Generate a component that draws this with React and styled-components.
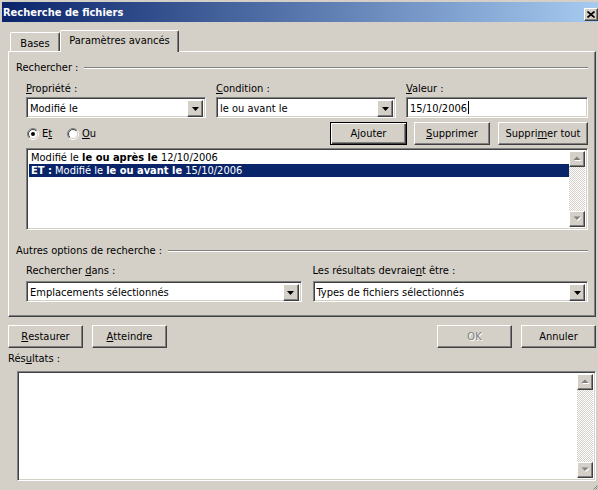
import React from 'react';
import styled, { createGlobalStyle, css } from 'styled-components';

const FONT = `"DejaVu Sans Condensed", "Liberation Sans", Arial, sans-serif`;

const Global = createGlobalStyle`
  html, body { margin: 0; padding: 0; background: #d4d0c8; }
  body { font-family: ${FONT}; font-size: 11px; color: #000; }
  * { box-sizing: border-box; }
  #root { width: 598px; height: 490px; }
`;

const raised = css`
  background: #d4d0c8;
  border: 1px solid;
  border-color: #fff #404040 #404040 #fff;
  box-shadow: inset -1px -1px #808080;
`;

const sunken = css`
  background: #fff;
  border: 1px solid;
  border-color: #808080 #fff #fff #808080;
  box-shadow: inset 1px 1px #404040, inset -1px -1px #d4d0c8;
`;

const Window = styled.div`
  position: relative;
  width: 598px;
  height: 490px;
  background: #d4d0c8;
  padding-top: 2px;
  padding-left: 2px;
  display: flex;
  flex-direction: column;
  overflow: hidden;
`;

const TitleBar = styled.div`
  height: 20px;
  display: flex;
  align-items: stretch;
  padding-left: 1px;
  background: linear-gradient(to right, #0a246a 0%, #a6caf0 100%);
  color: #fff;
  font-weight: bold;
  font-size: 11px;
`;

const TitleText = styled.div`
  flex: 1;
  line-height: 20px;
  padding-top: 1px;
  white-space: nowrap;
`;

const CloseButton = styled.div`
  ${raised};
  align-self: flex-end;
  width: 14px;
  height: 13px;
  margin-bottom: 1px;
  display: flex;
  align-items: center;
  justify-content: center;
`;

const Body = styled.div`
  padding: 8px 2px 0 6px;
  display: flex;
  flex-direction: column;
`;

const TabStrip = styled.div`
  height: 21px;
  display: flex;
  align-items: flex-end;
  padding-left: 2px;
`;

const Tab = styled.div`
  position: relative;
  width: ${(p) => p.$width}px;
  background: #d4d0c8;
  border-top: 1px solid #fff;
  border-left: 1px solid #fff;
  border-right: 1px solid #404040;
  box-shadow: inset -1px 0 #808080;
  border-radius: 2px 2px 0 0;
  text-align: center;
  line-height: 16px;
  white-space: nowrap;
  ${(p) =>
    p.$active
      ? css`
          height: 22px;
          margin-bottom: -1px;
          padding-top: 2px;
          z-index: 1;
        `
      : css`
          height: 19px;
          padding-top: 3px;
        `}
`;

const Panel = styled.div`
  height: 266px;
  border: 1px solid;
  border-color: #fff #404040 #404040 #fff;
  box-shadow: inset -1px -1px #808080;
  padding: 9px 7px 0 7px;
  display: flex;
  flex-direction: column;
`;

const GroupHeader = styled.div`
  display: flex;
  align-items: center;
  gap: 6px;
  height: 14px;
  line-height: 14px;
  margin-top: ${(p) => p.$top || 0}px;
  white-space: nowrap;
`;

const Etched = styled.div`
  flex: 1;
  height: 2px;
  border-top: 1px solid #808080;
  border-bottom: 1px solid #fff;
`;

const Indented = styled.div`
  padding-left: 10px;
  display: flex;
  flex-direction: column;
`;

const FieldsGrid = styled.div`
  display: grid;
  grid-template-columns: ${(p) => p.$cols};
  column-gap: ${(p) => p.$gap}px;
  margin-top: ${(p) => p.$top}px;
`;

const Field = styled.div`
  display: flex;
  flex-direction: column;
  min-width: 0;
`;

const Label = styled.div`
  height: 14px;
  line-height: 14px;
  margin-bottom: ${(p) => p.$gap}px;
  white-space: nowrap;
`;

const Key = styled.span`
  text-decoration: underline;
  text-underline-offset: 1px;
`;

const Combo = styled.div`
  ${sunken};
  height: 21px;
  padding: 2px;
  display: flex;
`;

const ComboText = styled.div`
  flex: 1;
  padding-left: 1px;
  line-height: 17px;
  white-space: nowrap;
  overflow: hidden;
`;

const DropButton = styled.div`
  ${raised};
  width: 16px;
  height: 17px;
  display: flex;
  align-items: center;
  justify-content: center;
`;

const Caret = styled.span`
  display: inline-block;
  width: 1px;
  height: 13px;
  background: #000;
  vertical-align: -2px;
  margin-left: 1px;
`;

const ActionRow = styled.div`
  display: flex;
  align-items: center;
  height: 23px;
  margin-top: 4px;
`;

const RadioGroup = styled.div`
  display: flex;
  padding-left: 1px;
`;

const RadioItem = styled.div`
  width: 40px;
  display: flex;
  align-items: center;
  gap: 3px;
  line-height: 14px;
`;

const ButtonGroup = styled.div`
  margin-left: auto;
  display: flex;
`;

const Button = styled.div`
  ${raised};
  width: ${(p) => p.$width}px;
  height: 23px;
  margin-left: ${(p) => p.$gap || 0}px;
  display: flex;
  align-items: center;
  justify-content: center;
  white-space: nowrap;
  ${(p) =>
    p.$default &&
    css`
      border-color: #000;
      box-shadow: inset 1px 1px #fff, inset -1px -1px #404040, inset -2px -2px #808080;
    `}
  ${(p) =>
    p.$disabled &&
    css`
      color: #808080;
      text-shadow: 1px 1px #fff;
    `}
`;

const ListBox = styled.div`
  ${sunken};
  margin-top: ${(p) => p.$top}px;
  margin-left: ${(p) => p.$left || 0}px;
  height: ${(p) => p.$height}px;
  padding: 2px;
  display: flex;
`;

const ListRows = styled.div`
  flex: 1;
  display: flex;
  flex-direction: column;
`;

const ListRow = styled.div`
  height: 13px;
  line-height: 13px;
  padding-left: 2px;
  white-space: nowrap;
  ${(p) =>
    p.$selected &&
    css`
      background: #0a246a;
      color: #fff;
    `}
`;

const ScrollBar = styled.div`
  width: 16px;
  display: flex;
  flex-direction: column;
  justify-content: space-between;
  background: repeating-conic-gradient(#fff 0 25%, #d4d0c8 0 50%) 0 0 / 2px 2px;
`;

const ScrollArrow = styled.div`
  ${raised};
  height: 16px;
  display: flex;
  align-items: center;
  justify-content: center;
`;

const BottomBar = styled.div`
  display: flex;
  margin-top: 8px;
`;

const Spacer = styled.div`
  flex: 1;
`;

const ResultsLabel = styled.div`
  height: 14px;
  line-height: 14px;
  margin-top: 4px;
`;

const Bold = styled.b`
  font-weight: bold;
`;

const Grip = styled.div`
  position: absolute;
  right: 0;
  bottom: 0;
  width: 6px;
  height: 6px;
  display: flex;
`;

function Triangle() {
  return (
    <svg width="7" height="4" viewBox="0 0 7 4">
      <polygon points="0,0 7,0 3.5,4" fill="#000" />
    </svg>
  );
}

function Arrow({ up }) {
  const pts = up ? '0.5,4 4,0.5 7.5,4' : '0.5,0.5 7.5,0.5 4,4';
  return (
    <svg width="9" height="6" viewBox="0 0 9 6">
      <polygon points={pts} fill="#fff" transform="translate(1,1)" />
      <polygon points={pts} fill="#808080" />
    </svg>
  );
}

function Radio({ checked, id }) {
  return (
    <svg width="12" height="12" viewBox="0 0 12 12">
      <defs>
        <linearGradient id={`o${id}`} x1="0" y1="0" x2="1" y2="1">
          <stop offset="0.5" stopColor="#808080" />
          <stop offset="0.5" stopColor="#ffffff" />
        </linearGradient>
        <linearGradient id={`i${id}`} x1="0" y1="0" x2="1" y2="1">
          <stop offset="0.5" stopColor="#404040" />
          <stop offset="0.5" stopColor="#d4d0c8" />
        </linearGradient>
      </defs>
      <circle cx="6" cy="6" r="5.5" fill="none" stroke={`url(#o${id})`} strokeWidth="1" />
      <circle cx="6" cy="6" r="4.5" fill="#fff" stroke={`url(#i${id})`} strokeWidth="1" />
      {checked && <circle cx="6" cy="6" r="2" fill="#000" />}
    </svg>
  );
}

function ComboBox({ children }) {
  return (
    <Combo>
      <ComboText>{children}</ComboText>
      <DropButton>
        <Triangle />
      </DropButton>
    </Combo>
  );
}

function VScroll() {
  return (
    <ScrollBar>
      <ScrollArrow>
        <Arrow up />
      </ScrollArrow>
      <ScrollArrow>
        <Arrow />
      </ScrollArrow>
    </ScrollBar>
  );
}

export default function App() {
  return (
    <>
      <Global />
      <Window>
        <TitleBar>
          <TitleText>Recherche de fichiers</TitleText>
          <CloseButton>
            <svg width="8" height="7" viewBox="0 0 8 7">
              <path d="M0.5 0.5 L7.5 6.5 M7.5 0.5 L0.5 6.5" stroke="#000" strokeWidth="1.7" />
            </svg>
          </CloseButton>
        </TitleBar>
        <Body>
          <TabStrip>
            <Tab $width={50}>Bases</Tab>
            <Tab $width={119} $active>
              Paramètres avancés
            </Tab>
          </TabStrip>
          <Panel>
            <GroupHeader>
              Rechercher :
              <Etched />
            </GroupHeader>
            <Indented>
              <FieldsGrid $cols="180px 180px 1fr" $gap={10} $top={7}>
                <Field>
                  <Label $gap={1}>
                    <Key>P</Key>ropriété :
                  </Label>
                  <ComboBox>Modifié le</ComboBox>
                </Field>
                <Field>
                  <Label $gap={1}>
                    <Key>C</Key>ondition :
                  </Label>
                  <ComboBox>le ou avant le</ComboBox>
                </Field>
                <Field>
                  <Label $gap={1}>
                    <Key>V</Key>aleur :
                  </Label>
                  <Combo>
                    <ComboText>
                      15/10/2006
                      <Caret />
                    </ComboText>
                  </Combo>
                </Field>
              </FieldsGrid>
              <ActionRow>
                <RadioGroup>
                  <RadioItem>
                    <Radio checked id="et" />
                    <span>
                      E<Key>t</Key>
                    </span>
                  </RadioItem>
                  <RadioItem>
                    <Radio id="ou" />
                    <span>
                      <Key>O</Key>u
                    </span>
                  </RadioItem>
                </RadioGroup>
                <ButtonGroup>
                  <Button $width={77} $default>
                    A<Key>j</Key>outer
                  </Button>
                  <Button $width={76} $gap={7}>
                    <Key>S</Key>upprimer
                  </Button>
                  <Button $width={90} $gap={8}>
                    Suppri<Key>m</Key>er tout
                  </Button>
                </ButtonGroup>
              </ActionRow>
              <ListBox $top={3} $height={82}>
                <ListRows>
                  <ListRow>
                    Modifié le <Bold>le ou après le</Bold> 12/10/2006
                  </ListRow>
                  <ListRow $selected>
                    <Bold>ET :</Bold> Modifié le <Bold>le ou avant le</Bold> 15/10/2006
                  </ListRow>
                </ListRows>
                <VScroll />
              </ListBox>
            </Indented>
            <GroupHeader $top={14}>
              Autres options de recherche :
              <Etched />
            </GroupHeader>
            <Indented>
              <FieldsGrid $cols="1fr 1fr" $gap={11} $top={6}>
                <Field>
                  <Label $gap={3}>
                    Rechercher <Key>d</Key>ans :
                  </Label>
                  <ComboBox>Emplacements sélectionnés</ComboBox>
                </Field>
                <Field>
                  <Label $gap={3}>
                    Les résultats devraie<Key>n</Key>t être :
                  </Label>
                  <ComboBox>Types de fichiers sélectionnés</ComboBox>
                </Field>
              </FieldsGrid>
            </Indented>
          </Panel>
          <BottomBar>
            <Button $width={75}>
              <Key>R</Key>estaurer
            </Button>
            <Button $width={75} $gap={9}>
              <Key>A</Key>tteindre
            </Button>
            <Spacer />
            <Button $width={75} $disabled>
              OK
            </Button>
            <Button $width={75} $gap={9}>
              Annuler
            </Button>
          </BottomBar>
          <ResultsLabel>
            Rés<Key>u</Key>ltats :
          </ResultsLabel>
          <ListBox $top={5} $left={9} $height={110}>
            <ListRows />
            <VScroll />
          </ListBox>
        </Body>
        <Grip>
          <svg width="6" height="6" viewBox="0 0 6 6">
            <path d="M5.5 1.5 L1.5 5.5 M5.5 3.5 L3.5 5.5" stroke="#808080" strokeWidth="1" />
          </svg>
        </Grip>
      </Window>
    </>
  );
}
